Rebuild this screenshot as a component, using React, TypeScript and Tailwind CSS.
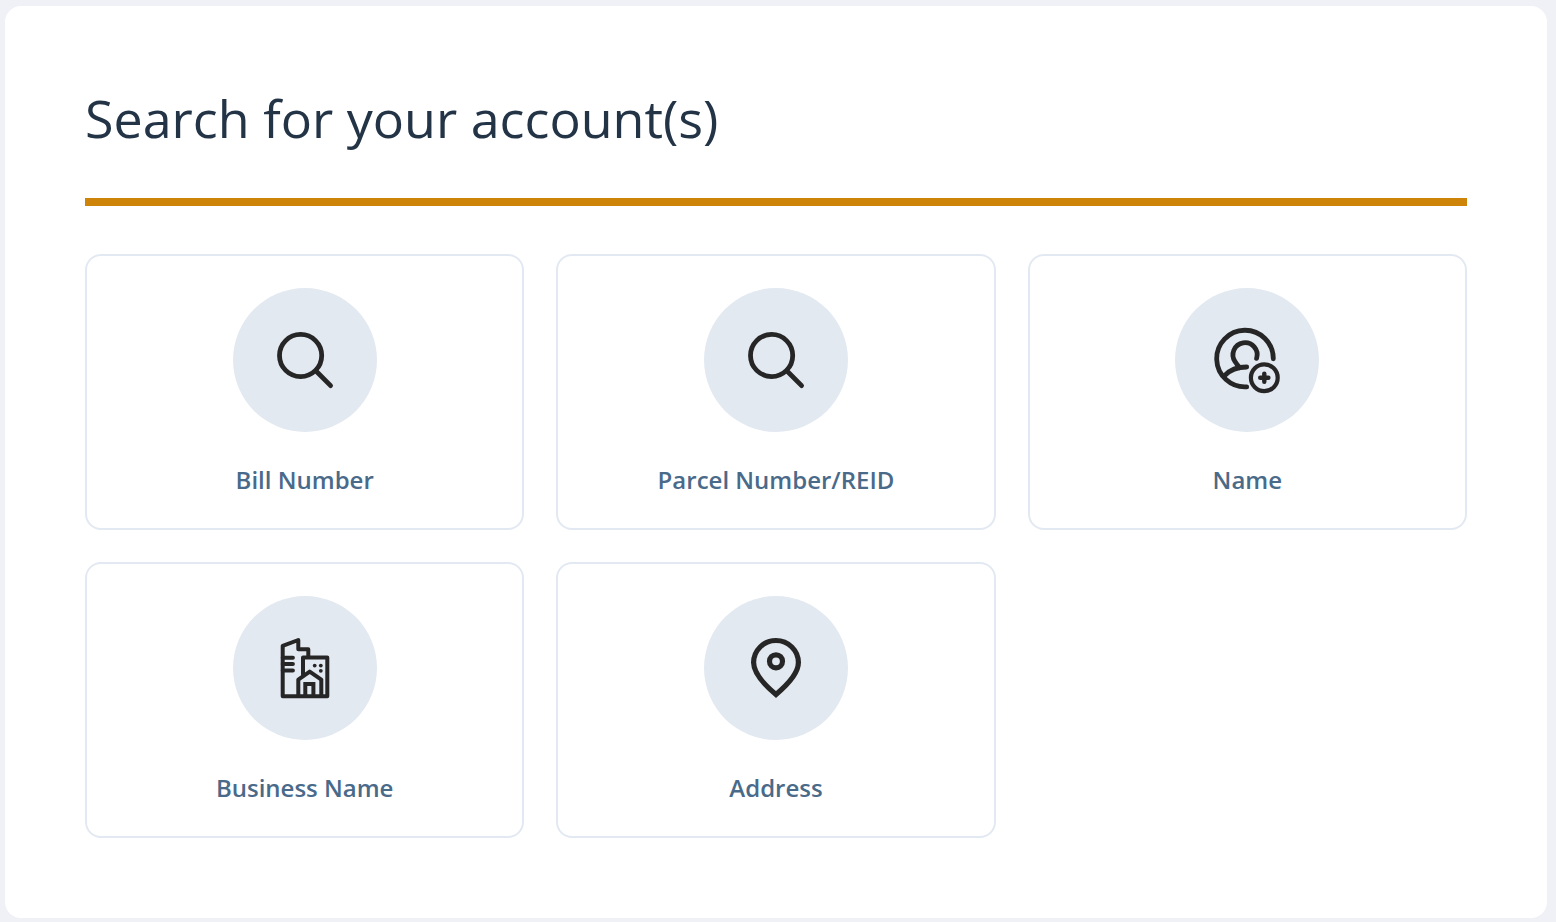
import { ReactNode } from "react";

type SearchOption = {
  label: string;
  icon: ReactNode;
};

function Icon({ children }: { children: ReactNode }) {
  return (
    <svg
      viewBox="0 0 80 80"
      className="size-20"
      fill="none"
      stroke="#262626"
      strokeWidth="4.8"
      strokeLinecap="round"
      strokeLinejoin="round"
      aria-hidden="true"
    >
      {children}
    </svg>
  );
}

function SearchIcon() {
  return (
    <Icon>
      <circle cx="35.6" cy="35.5" r="21.1" />
      <path d="M51 51 65.6 65.6" />
    </Icon>
  );
}

function PersonAddIcon() {
  return (
    <Icon>
      <path d="M66.3 38.8A28.3 28.3 0 1 0 39.7 66.8" />
      <path d="M49.6 38.4A12.1 12.1 0 1 0 28.2 41.8C29.3 43.6 30.8 45.4 32.4 47.6" />
      <path d="M39.7 47C30 47 22.5 50.3 17.6 55.6" />
      <circle cx="57.3" cy="57.7" r="13.4" strokeWidth="4.2" />
      <path d="M57.3 53.6v8.2M53.2 57.7h8.2" strokeWidth="4.4" />
    </Icon>
  );
}

function BusinessIcon() {
  return (
    <Icon>
      <g strokeWidth="4">
        <path d="M43.3 29.2V21.3H33.3V12L17.7 17.8V68.3H62.3V29.5H38V46.5" />
        <path d="M17.7 29.7h10.2M17.7 36h10.2M17.7 42.6h10.2" />
        <path d="M33.3 68V51.6L44.7 43.6 56.3 51.6V68" />
        <path d="M40.3 68V56.1H48.4V68" strokeLinejoin="miter" />
      </g>
      <g fill="#262626" stroke="none">
        <circle cx="49.7" cy="37.6" r="1.9" />
        <circle cx="55.8" cy="37.6" r="1.9" />
        <circle cx="55.8" cy="42.8" r="1.9" />
      </g>
    </Icon>
  );
}

function PinIcon() {
  return (
    <Icon>
      <path
        d="M40 66.5C32 59.8 17.6 47 17.6 34.6A22.4 22.1 0 0 1 62.4 34.6C62.4 47 48 59.8 40 66.5Z"
        strokeWidth="5.2"
        strokeLinejoin="miter"
      />
      <circle cx="40" cy="33.3" r="6.5" strokeWidth="5.2" />
    </Icon>
  );
}

const options: SearchOption[] = [
  { label: "Bill Number", icon: <SearchIcon /> },
  { label: "Parcel Number/REID", icon: <SearchIcon /> },
  { label: "Name", icon: <PersonAddIcon /> },
  { label: "Business Name", icon: <BusinessIcon /> },
  { label: "Address", icon: <PinIcon /> },
];

export default function App() {
  return (
    <div className="min-h-screen bg-[#f0f1f6] pt-[6px] pr-[9px] pb-1 pl-[5px] font-['Open_Sans',sans-serif]">
      <main className="rounded-2xl bg-white p-20">
        <h1 className="text-[52px] leading-16 text-[#243447]">
          Search for your account(s)
        </h1>
        <hr className="mt-12 border-t-8 border-[#ce8408]" />
        <div className="mt-12 grid grid-cols-3 gap-8">
          {options.map((option) => (
            <button
              key={option.label}
              type="button"
              className="flex cursor-pointer flex-col items-center gap-8 rounded-2xl border-2 border-[#e3e9f2] bg-white p-8"
            >
              <span className="flex size-36 items-center justify-center rounded-full bg-[#e3e9f1]">
                {option.icon}
              </span>
              <span className="text-2xl font-semibold text-[#4a6a8a]">
                {option.label}
              </span>
            </button>
          ))}
        </div>
      </main>
    </div>
  );
}
